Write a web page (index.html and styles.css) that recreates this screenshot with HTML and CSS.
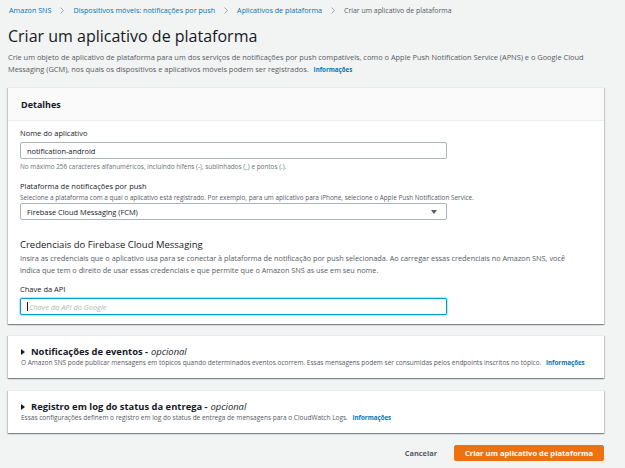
FILE: index.html
```html
<!DOCTYPE html>
<html lang="pt-BR">
<head>
<meta charset="utf-8">
<link rel="stylesheet" href="styles.css">
</head>
<body>
<div class="page">
  <nav class="crumbs">
    <a class="crumb-link">Amazon SNS</a>
    <svg class="sep" width="4" height="7" viewBox="0 0 4 7"><path d="M0.5 0.5 L3.5 3.5 L0.5 6.5" fill="none" stroke="#879596" stroke-width="0.8"/></svg>
    <a class="crumb-link">Dispositivos móveis: notificações por push</a>
    <svg class="sep" width="4" height="7" viewBox="0 0 4 7"><path d="M0.5 0.5 L3.5 3.5 L0.5 6.5" fill="none" stroke="#879596" stroke-width="0.8"/></svg>
    <a class="crumb-link">Aplicativos de plataforma</a>
    <svg class="sep" width="4" height="7" viewBox="0 0 4 7"><path d="M0.5 0.5 L3.5 3.5 L0.5 6.5" fill="none" stroke="#879596" stroke-width="0.8"/></svg>
    <span class="crumb-current">Criar um aplicativo de plataforma</span>
  </nav>
  <h1 class="title">Criar um aplicativo de plataforma</h1>
  <p class="intro">Crie um objeto de aplicativo de plataforma para um dos serviços de notificações por push compatíveis, como o Apple Push Notification Service (APNS) e o Google Cloud Messaging (GCM), nos quais os dispositivos e aplicativos móveis podem ser registrados. <a class="info">Informações</a></p>

  <section class="card">
    <div class="card-head">Detalhes</div>
    <div class="card-body">
      <div class="field">
        <div class="label">Nome do aplicativo</div>
        <div class="input">notification-android</div>
        <div class="hint">No máximo 256 caracteres alfanuméricos, incluindo hífens (-), sublinhados (_) e pontos (.).</div>
      </div>
      <div class="field">
        <div class="label">Plataforma de notificações por push</div>
        <div class="desc">Selecione a plataforma com a qual o aplicativo está registrado. Por exemplo, para um aplicativo para iPhone, selecione o Apple Push Notification Service.</div>
        <div class="input select"><span>Firebase Cloud Messaging (FCM)</span><span class="caret"></span></div>
      </div>
      <h2 class="sub">Credenciais do Firebase Cloud Messaging</h2>
      <p class="subtext">Insira as credenciais que o aplicativo usa para se conectar à plataforma de notificação por push selecionada. Ao carregar essas credenciais no Amazon SNS, você indica que tem o direito de usar essas credenciais e que permite que o Amazon SNS as use em seu nome.</p>
      <div class="field last">
        <div class="label">Chave da API</div>
        <div class="input focus"><span class="cursor"></span><span class="ph">Chave da API do Google</span></div>
      </div>
    </div>
  </section>

  <section class="card collapsed">
    <div class="exp-title"><span class="tri"></span>Notificações de eventos - <em>opcional</em></div>
    <div class="exp-desc">O Amazon SNS pode publicar mensagens em tópicos quando determinados eventos ocorrem. Essas mensagens podem ser consumidas pelos endpoints inscritos no tópico. <a class="info">Informações</a></div>
  </section>

  <section class="card collapsed third">
    <div class="exp-title"><span class="tri"></span>Registro em log do status da entrega - <em>opcional</em></div>
    <div class="exp-desc">Essas configurações definem o registro em log do status de entrega de mensagens para o CloudWatch Logs. <a class="info">Informações</a></div>
  </section>

  <div class="actions">
    <button class="btn-link">Cancelar</button>
    <button class="btn-primary">Criar um aplicativo de plataforma</button>
  </div>
</div>
</body>
</html>
```
FILE: styles.css
```css
* { box-sizing: border-box; }
html, body { margin: 0; padding: 0; }
body {
  background: #f2f3f3;
  font-family: "Open Sans", "Noto Sans", sans-serif;
  color: #16191f;
  width: 625px;
  height: 468px;
  overflow: hidden;
}
.page {
  padding: 0 21px 0 8px;
}
.crumbs {
  display: flex;
  align-items: center;
  gap: 9px;
  font-size: 7.2px;
  height: 20px;
  padding-left: 1px;
}
.crumb-link { color: #0073bb; }
.sep { display: block; }
.crumb-current { color: #545b64; font-size: 6.9px; }
.title {
  font-size: 16px;
  font-weight: 400;
  margin: 6px 0 0;
  line-height: 20px;
}
.intro {
  font-size: 7.4px;
  line-height: 12px;
  color: #545b64;
  margin: 5px 0 0;
}
.info {
  color: #0073bb;
  font-weight: 700;
  font-size: 6.2px;
  margin-left: 3px;
}
.card {
  background: #fff;
  box-shadow: 0 1px 1px 0 rgba(0,28,36,.3), 1px 1px 1px 0 rgba(0,28,36,.15), -1px 1px 1px 0 rgba(0,28,36,.15);
  border-top: 1px solid #eaeded;
  margin-top: 11px;
}
.card.third { margin-top: 12px; }
.card-head {
  height: 33px;
  background: #fafafa;
  border-bottom: 1px solid #eaeded;
  font-size: 9px;
  font-weight: 700;
  padding-left: 13px;
  display: flex;
  align-items: center;
}
.card-body {
  padding: 6px 13px 9px 12px;
}
.field { margin-bottom: 9px; }
.field.last { margin-bottom: 0; }
.label {
  font-size: 7.5px;
  line-height: 12px;
  margin-bottom: 3px;
}
.input {
  width: 427px;
  height: 17px;
  border: 1px solid #aab7b8;
  border-radius: 2px;
  font-size: 7.4px;
  display: flex;
  align-items: center;
  padding-left: 6px;
  background: #fff;
}
.select {
  justify-content: space-between;
  padding-right: 9px;
  margin-top: 1px;
}
.caret {
  width: 0; height: 0;
  border-left: 3px solid transparent;
  border-right: 3px solid transparent;
  border-top: 4px solid #545b64;
}
.focus {
  border-color: #00a1c9;
  box-shadow: 0 0 2px #00a1c9;
}
.cursor {
  width: 1px; height: 9px;
  background: #16191f;
  margin-right: 1px;
}
.ph {
  color: #aab7b8;
  font-style: italic;
}
.hint {
  font-size: 6.4px;
  line-height: 9px;
  color: #687078;
  margin-top: 3px;
}
.desc {
  font-size: 6.4px;
  line-height: 9px;
  color: #545b64;
  margin-top: -2px;
}
.sub {
  font-size: 9.5px;
  font-weight: 400;
  margin: 18px 0 0;
  line-height: 14px;
}
.subtext {
  font-size: 7.3px;
  line-height: 12px;
  color: #545b64;
  margin: 0 0 7px;
  max-width: 560px;
}
.collapsed {
  padding: 9px 13px 10px;
}
.exp-title {
  font-size: 9.4px;
  font-weight: 700;
  line-height: 14px;
  display: flex;
  align-items: center;
  margin-bottom: -1px;
}
.exp-title em {
  font-weight: 400;
  margin-left: 3px;
}
.tri {
  width: 0; height: 0;
  border-top: 3px solid transparent;
  border-bottom: 3px solid transparent;
  border-left: 4px solid #16191f;
  margin-right: 6px;
}
.exp-desc {
  font-size: 6.5px;
  line-height: 10px;
  color: #545b64;
  white-space: nowrap;
}
.actions {
  display: flex;
  justify-content: flex-end;
  align-items: center;
  gap: 17px;
  margin-top: 12px;
}
.btn-link {
  background: none;
  border: 0;
  font-family: inherit;
  font-size: 7.4px;
  font-weight: 700;
  color: #545b64;
  padding: 0 0;
}
.btn-primary {
  background: #ec7211;
  border: 1px solid #ec7211;
  color: #fff;
  font-family: inherit;
  font-size: 7.6px;
  font-weight: 700;
  width: 150px;
  height: 16px;
  border-radius: 2px;
  padding: 0;
}
```
